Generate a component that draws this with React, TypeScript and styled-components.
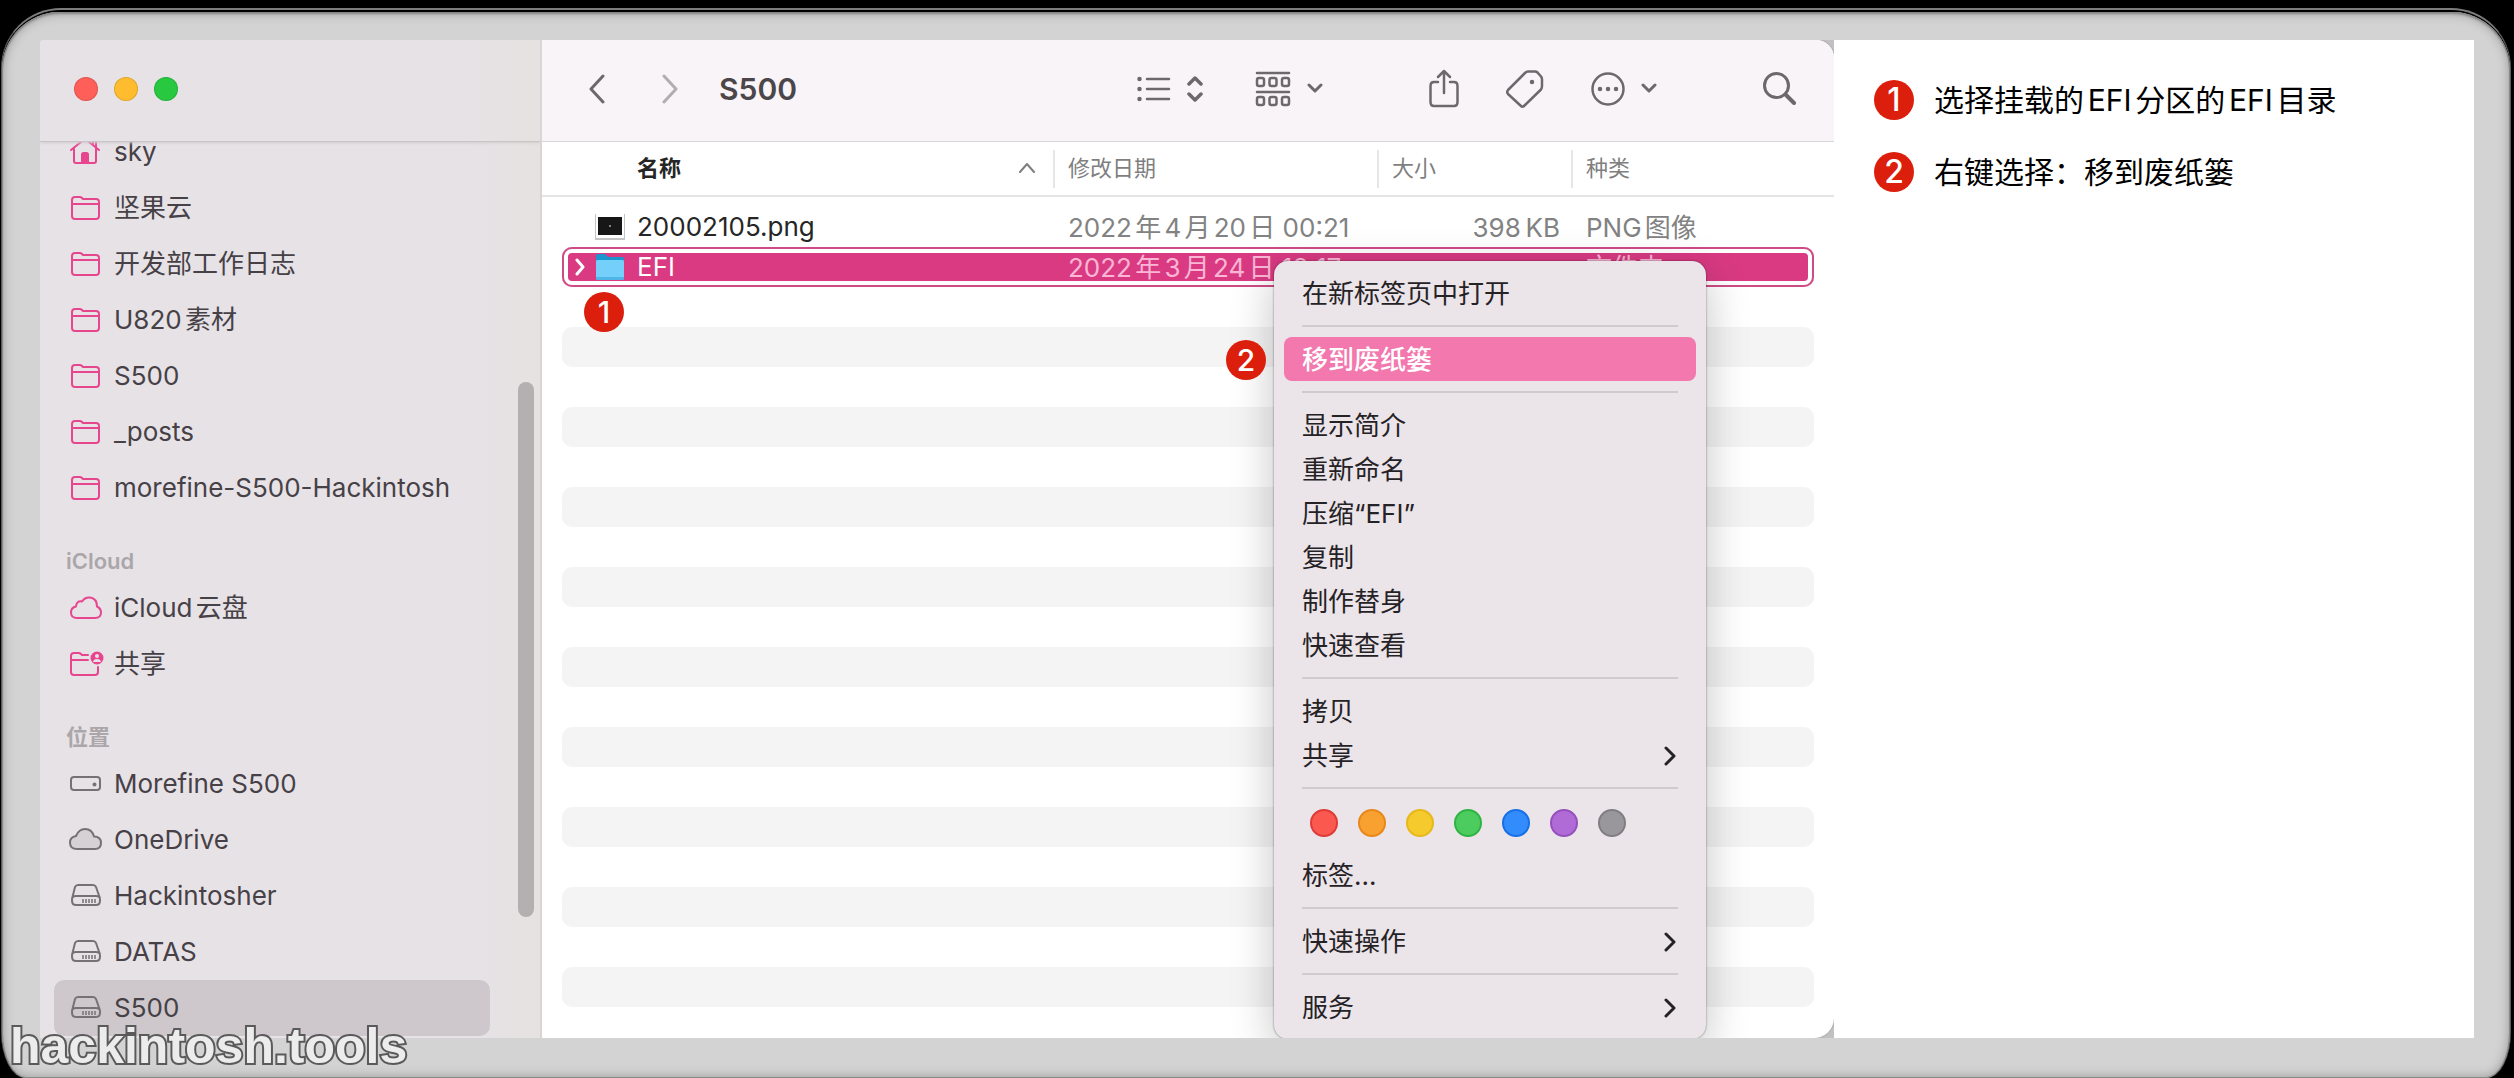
import React from "react";
import styled, { createGlobalStyle, css } from "styled-components";

const Global = createGlobalStyle`
  *, *::before, *::after { box-sizing: border-box; }
  html { background: #000; }
  body {
    margin: 0;
    background: #000;
    font-family: Inter, "Noto Sans CJK SC", sans-serif;
    font-size: 26px;
    line-height: 40px;
    text-autospace: normal;
  }
  button { font: inherit; color: inherit; background: none; border: 0; margin: 0; padding: 0; }
  ul { list-style: none; margin: 0; padding: 0; }
  svg { display: block; flex: none; }
`;

const Page = styled.div`
  position: relative;
  padding: 8px 3px 0 1px;
  overflow: hidden;
`;

const Bezel = styled.div`
  border: 1px solid #5c5c5c;
  border-top: 2px solid #7d7d7d;
  border-bottom: 0;
  border-radius: 60px 60px 24px 24px / 60px 60px 46px 46px;
  padding: 2px 0 0;
`;

const Frame = styled.div`
  padding: 28px 36px 40px 38px;
  border-radius: 58px 58px 24px 24px / 58px 58px 46px 46px;
  background: #d3d3d3;
  box-shadow: inset 0 2px 2px #8a8a8a, inset 0 0 12px #8f8f8f, inset 0 0 0 1px #858585;
  display: flex;
`;

const Window = styled.div`
  position: relative;
  flex: 1;
  min-width: 0;
  display: flex;
  overflow: hidden;
  background: linear-gradient(to right, #e7e2e5 50%, #c2c0c2 50%);
  border-radius: 4px 0 0 0;
`;

const Sidebar = styled.aside`
  position: relative;
  flex: none;
  width: 502px;
  background: linear-gradient(to right, #e7e2e6 85%, #e5e2e1);
  border-right: 2px solid #d9d5d7;
  overflow: hidden;
`;

const TitleBar = styled.div`
  position: relative;
  z-index: 1;
  height: 102px;
  padding: 0 34px 4px;
  display: flex;
  align-items: center;
  gap: 16px;
  background: linear-gradient(to right, #e7e2e5 85%, #e5e2e1);
  border-bottom: 1px solid #c9c5c6;
  box-shadow: 0 1px 3px #d0cccd;
`;

const Light = styled.button<{ $color: string }>`
  width: 24px;
  height: 24px;
  border-radius: 50%;
  background: ${(p) => p.$color};
  box-shadow: inset 0 0 0 1px rgba(0, 0, 0, 0.12);
`;

const SideScroll = styled.nav`
  margin-top: -18px;
  padding: 0 50px 2px 14px;
`;

const SideHeading = styled.h2`
  margin: 0;
  height: 64px;
  padding: 26px 0 0 12px;
  font-size: 22px;
  line-height: 38px;
  font-weight: 600;
  color: #aba6aa;
`;

const SideItem = styled.button<{ $selected?: boolean }>`
  display: flex;
  align-items: center;
  gap: 10px;
  width: 100%;
  height: 56px;
  padding: 0 14px;
  text-align: left;
  color: #464146;
  border-radius: 10px;
  background: ${(p) => (p.$selected ? "#cec8cc" : "transparent")};
`;

const ScrollThumb = styled.div`
  position: absolute;
  right: 6px;
  top: 342px;
  width: 16px;
  height: 535px;
  border-radius: 8px;
  background: #b3b0b2;
`;

const Main = styled.main`
  flex: 1;
  min-width: 0;
  background: #fff;
  border-radius: 0 18px 20px 0;
  box-shadow: 0 0 2px #8c8c8c;
  overflow: hidden;
`;

const Toolbar = styled.header`
  height: 102px;
  padding: 0 38px 4px 47px;
  display: flex;
  align-items: center;
  background: #f9f4f8;
  border-bottom: 1px solid #dad6d9;
  color: #6e686d;
`;

const Tools = styled.div<{ $gap: number }>`
  display: flex;
  align-items: center;
  gap: ${(p) => p.$gap}px;
`;

const ToolButton = styled.button<{ $dim?: boolean }>`
  display: flex;
  align-items: center;
  gap: 16px;
  opacity: ${(p) => (p.$dim ? 0.5 : 1)};
`;

const Title = styled.h1`
  margin: 0 auto 0 41px;
  font-size: 30px;
  font-weight: 600;
  color: #4b464a;
`;

const Files = styled.table`
  display: block;
  width: 100%;
  thead, tbody { display: block; }
  tbody { padding: 10px 20px 31px; }
`;

const columns = css`
  display: grid;
  grid-template-columns: minmax(0, 1fr) 324px 194px 243px;
`;

const HeadRow = styled.tr`
  ${columns}
  align-items: center;
  height: 55px;
  padding: 0 20px;
  border-bottom: 2px solid #e4e4e4;
`;

const HeadCell = styled.th<{ $main?: boolean }>`
  display: flex;
  align-items: center;
  justify-content: space-between;
  height: 38px;
  padding: ${(p) => (p.$main ? "0 18px 0 75px" : "0 0 0 13px")};
  border-left: ${(p) => (p.$main ? "0" : "2px solid #e6e6e6")};
  font-size: 22px;
  line-height: 36px;
  padding-bottom: 2px;
  font-weight: ${(p) => (p.$main ? 700 : 400)};
  color: ${(p) => (p.$main ? "#262626" : "#7f7f7f")};
`;

const Row = styled.tr<{ $striped?: boolean; $selected?: boolean }>`
  ${columns}
  height: 40px;
  line-height: 42px;
  border-radius: 10px;
  background: ${(p) => (p.$striped ? "#f4f4f4" : "transparent")};
  color: #828282;
  ${(p) =>
    p.$selected &&
    css`
      color: #fbb6d6;
      background: #d93a82;
      border: 0;
      box-shadow: inset 0 0 0 2px #cf4b85, inset 0 0 0 6px #fff;
    `}
`;

const NameCell = styled.td<{ $selected?: boolean }>`
  display: flex;
  align-items: center;
  gap: 8px;
  height: 40px;
  padding: 0 0 0 12px;
  color: ${(p) => (p.$selected ? "#fff" : "#262626")};
`;

const Disclosure = styled.span`
  display: flex;
  width: 13px;
`;

const FileName = styled.span`
  padding-left: 4px;
`;

const Cell = styled.td<{ $end?: boolean }>`
  padding: 0 11px 0 15px;
  text-align: ${(p) => (p.$end ? "right" : "left")};
`;

const Guide = styled.section`
  flex: none;
  width: 640px;
  padding: 40px;
  background: #fff;
`;

const Steps = styled.ol`
  list-style: none;
  margin: 0;
  padding: 0;
  display: grid;
  gap: 32px;
`;

const Step = styled.li`
  display: flex;
  align-items: center;
  gap: 20px;
  font-size: 30px;
  color: #000;
`;

const Badge = styled.span`
  flex: none;
  display: flex;
  align-items: center;
  justify-content: center;
  width: 40px;
  height: 40px;
  border-radius: 50%;
  background: #dc1e0c;
  color: #fff;
  font-size: 32px;
  font-weight: 500;
`;

const Pin = styled(Badge)<{ $x: number; $y: number }>`
  position: absolute;
  left: ${(p) => p.$x}px;
  top: ${(p) => p.$y}px;
  font-size: 30px;
`;

const Menu = styled.div`
  position: absolute;
  left: 1234px;
  top: 221px;
  width: 432px;
  padding: 10px;
  border-radius: 14px;
  background: #ebe4e9;
  box-shadow: 0 0 2px rgba(0, 0, 0, 0.55), 0 12px 44px rgba(0, 0, 0, 0.24);
  color: #252225;
`;

const MenuItem = styled.button<{ $active?: boolean }>`
  display: flex;
  align-items: center;
  justify-content: space-between;
  width: 100%;
  height: 44px;
  padding: 2px 20px 0 18px;
  border-radius: 8px;
  text-align: left;
  color: ${(p) => (p.$active ? "#fff" : "inherit")};
  font-weight: ${(p) => (p.$active ? 500 : 400)};
  background: ${(p) => (p.$active ? "#f278ae" : "transparent")};
`;

const Separator = styled.hr`
  height: 2px;
  margin: 10px 18px;
  border: 0;
  background: #d0c9ce;
`;

const Tags = styled.div`
  display: flex;
  gap: 20px;
  padding: 10px 26px 16px;
`;

const Tag = styled.button<{ $fill: string; $edge: string }>`
  width: 28px;
  height: 28px;
  border-radius: 50%;
  background: ${(p) => p.$fill};
  border: 2px solid ${(p) => p.$edge};
`;

const Watermark = styled.div`
  position: absolute;
  left: 10px;
  bottom: 2px;
  font-family: "Liberation Sans", Arial, sans-serif;
  font-size: 50px;
  line-height: 60px;
  font-weight: 700;
  color: #ececec;
  -webkit-text-stroke: 4px #5a5a5a;
  paint-order: stroke fill;
`;

const Stroke = ({ w, h, sw = 3, children }: { w: number; h: number; sw?: number; children: React.ReactNode }) => (
  <svg width={w} height={h} viewBox={`0 0 ${w} ${h}`} fill="none" stroke="currentColor" strokeWidth={sw} strokeLinecap="round" strokeLinejoin="round" aria-hidden="true">
    {children}
  </svg>
);

const PINK = "#e8458f";
const GRAY = "#777176";

const SideSvg = ({ color, children }: { color: string; children: React.ReactNode }) => (
  <svg width="36" height="32" viewBox="0 0 36 32" fill="none" stroke={color} strokeWidth="2" strokeLinecap="round" strokeLinejoin="round" aria-hidden="true">
    {children}
  </svg>
);

const icons: Record<string, React.ReactNode> = {
  home: (
    <SideSvg color={PINK}>
      <path d="M3 14 16 3.500Q17 3 18 3.500L31 14M6 12.500V25Q6 27 8 27H26Q28 27 28 25V12.500M25 8V4H28V11" />
      <path d="M14 27V18.500Q14 17 15.500 17H18.500Q20 17 20 18.500V27Z" fill={PINK} />
    </SideSvg>
  ),
  folder: (
    <SideSvg color={PINK}>
      <path d="M4 12V8Q4 5 7 5H11.500Q13 5 14 6L15 7H28Q31 7 31 10V24Q31 27 28 27H7Q4 27 4 24ZM4 12H31" />
    </SideSvg>
  ),
  cloud: (
    <SideSvg color={PINK}>
      <path d="M9 26Q3 26 3 20.500Q3 15.500 8 14.500Q8.500 8.500 14 9.500Q17 5 22 5.500Q29 6.500 29 14.500Q33 16.500 33 20.500Q33 26 27 26Z" />
    </SideSvg>
  ),
  shared: (
    <SideSvg color={PINK}>
      <path d="M3 12V8Q3 5 6 5H10.500Q12 5 13 6L14 7H20M3 12H20M3 12V24Q3 27 6 27H27Q30 27 30 24V19" />
      <circle cx="29" cy="10" r="5.500" fill={PINK} />
      <circle cx="29" cy="8" r="2" fill="#e7e2e6" stroke="none" />
      <path d="M25 14Q25.500 11 29 11Q32.500 11 33 14Z" fill="#e7e2e6" stroke="none" />
    </SideSvg>
  ),
  mini: (
    <SideSvg color={GRAY}>
      <rect x="3" y="9" width="29" height="13" rx="3" />
      <circle cx="26.500" cy="16.500" r="1" fill={GRAY} />
    </SideSvg>
  ),
  onedrive: (
    <SideSvg color={GRAY}>
      <path d="M9 25Q2 25 2 18.500Q2 13 8 12Q11 5 17 5Q24 5 26 12.500Q33 12.500 33 19Q33 25 27 25Z" fill="#d6d1d4" />
    </SideSvg>
  ),
  disk: (
    <SideSvg color={GRAY}>
      <path d="M10 5H25Q27 5 28 7L31.500 17Q32 18 32 20.500Q32 25 28 25H8Q4 25 4 20.500Q4 18 4.500 17L7 7Q8 5 10 5ZM5 17Q6 16 8 16H28Q30 16 31 17" />
      <path d="M15 19V23M18 19V23M21 19V23M24 19V23M27 19V23" strokeWidth="1.500" strokeLinecap="butt" />
    </SideSvg>
  ),
};

const places = [
  {
    items: [
      ["home", "sky"],
      ["folder", "坚果云"],
      ["folder", "开发部工作日志"],
      ["folder", "U820素材"],
      ["folder", "S500"],
      ["folder", "_posts"],
      ["folder", "morefine-S500-Hackintosh"],
    ],
  },
  { heading: "iCloud", items: [["cloud", "iCloud云盘"], ["shared", "共享"]] },
  {
    heading: "位置",
    items: [
      ["mini", "Morefine S500"],
      ["onedrive", "OneDrive"],
      ["disk", "Hackintosher"],
      ["disk", "DATAS"],
      ["disk", "S500", "selected"],
    ],
  },
];

const ChevronDown = () => (
  <Stroke w={16} h={12} sw={3}>
    <path d="M2 2 8 8 14 2" />
  </Stroke>
);

const MenuArrow = () => (
  <Stroke w={12} h={20} sw={3}>
    <path d="M2 2 10 10 2 18" />
  </Stroke>
);

type Entry = { label: string; sub?: boolean; active?: boolean };
const beforeTags: Entry[][] = [
  [{ label: "在新标签页中打开" }],
  [{ label: "移到废纸篓", active: true }],
  [
    { label: "显示简介" },
    { label: "重新命名" },
    { label: "压缩“EFI”" },
    { label: "复制" },
    { label: "制作替身" },
    { label: "快速查看" },
  ],
  [{ label: "拷贝" }, { label: "共享", sub: true }],
];
const afterTags: Entry[][] = [[{ label: "标签..." }], [{ label: "快速操作", sub: true }], [{ label: "服务", sub: true }]];

const tagColors = [
  ["红色", "#fb5850", "#dd3c37"],
  ["橙色", "#f9a130", "#e8881a"],
  ["黄色", "#f4ca2c", "#e6b81c"],
  ["绿色", "#4ccc5e", "#2fb344"],
  ["蓝色", "#328cfb", "#1670e6"],
  ["紫色", "#b06bd6", "#9450bd"],
  ["灰色", "#99979b", "#807e82"],
];

const Items = ({ list }: { list: Entry[] }) => (
  <>
    {list.map((e) => (
      <MenuItem key={e.label} role="menuitem" $active={e.active}>
        {e.label}
        {e.sub && <MenuArrow />}
      </MenuItem>
    ))}
  </>
);

const fillerRows = Array.from({ length: 18 }, (_, i) => i);

export default function App() {
  return (
    <>
      <Global />
      <Page>
        <Bezel>
          <Frame>
            <Window>
              <Sidebar>
                <TitleBar>
                  <Light $color="#fe5f58" aria-label="关闭" />
                  <Light $color="#febc2e" aria-label="最小化" />
                  <Light $color="#28c941" aria-label="缩放" />
                </TitleBar>
                <SideScroll>
                  {places.map((group, i) => (
                    <div key={i}>
                      {group.heading && <SideHeading>{group.heading}</SideHeading>}
                      <ul>
                        {group.items.map(([icon, label, selected]) => (
                          <li key={label}>
                            <SideItem $selected={!!selected}>
                              {icons[icon]}
                              {label}
                            </SideItem>
                          </li>
                        ))}
                      </ul>
                    </div>
                  ))}
                </SideScroll>
                <ScrollThumb />
              </Sidebar>
              <Main>
                <Toolbar>
                  <Tools $gap={57}>
                    <ToolButton aria-label="后退">
                      <Stroke w={16} h={30}>
                        <path d="M14 2 2 15 14 28" />
                      </Stroke>
                    </ToolButton>
                    <ToolButton aria-label="前进" $dim>
                      <Stroke w={16} h={30}>
                        <path d="M2 2 14 15 2 28" />
                      </Stroke>
                    </ToolButton>
                  </Tools>
                  <Title>S500</Title>
                  <Tools $gap={106}>
                    <Tools $gap={52}>
                      <ToolButton aria-label="列表显示">
                        <Stroke w={34} h={26} sw={2.5}>
                          <path d="M10 3H32M10 13H32M10 23H32" />
                          <path d="M2.500 3V3M2.500 13V13M2.500 23V23" strokeWidth="4.500" />
                        </Stroke>
                        <Stroke w={16} h={26} sw={3.5}>
                          <path d="M2 8 8 2 14 8M2 18 8 24 14 18" />
                        </Stroke>
                      </ToolButton>
                      <ToolButton aria-label="分组">
                        <Stroke w={36} h={36} sw={2.5}>
                          <path d="M2 2H34M2 21H34" />
                          <rect x="2" y="7" width="7" height="8" rx="2" />
                          <rect x="14.500" y="7" width="7" height="8" rx="2" />
                          <rect x="27" y="7" width="7" height="8" rx="2" />
                          <rect x="2" y="26" width="7" height="8" rx="2" />
                          <rect x="14.500" y="26" width="7" height="8" rx="2" />
                          <rect x="27" y="26" width="7" height="8" rx="2" />
                        </Stroke>
                        <ChevronDown />
                      </ToolButton>
                    </Tools>
                    <Tools $gap={47}>
                      <ToolButton aria-label="共享">
                        <Stroke w={30} h={40} sw={2.5}>
                          <path d="M9 13H5Q1.500 13 1.500 17V33Q1.500 37 5 37H25Q28.500 37 28.500 33V17Q28.500 13 25 13H21M15 24V2M9 8 15 2 21 8" />
                        </Stroke>
                      </ToolButton>
                      <ToolButton aria-label="编辑标签">
                        <Stroke w={38} h={38} sw={2.5}>
                          <path d="M19 3Q20.500 1.500 22 1.500H29Q30.500 1.500 31.500 2.500L35 6.500Q36 7.500 36 9.500V16Q36 18 35 19.500L18 36Q16.500 37.500 15 36L2 24Q0.500 22 2 20Z" />
                          <circle cx="26" cy="12" r="1.500" fill="currentColor" stroke-width="1.500" />
                        </Stroke>
                      </ToolButton>
                      <ToolButton aria-label="更多操作">
                        <Stroke w={34} h={34} sw={2.5}>
                          <circle cx="17" cy="17" r="15.500" />
                          <path d="M9 17V17M17 17V17M25 17V17" strokeWidth="4.500" />
                        </Stroke>
                        <ChevronDown />
                      </ToolButton>
                    </Tools>
                    <ToolButton aria-label="搜索">
                      <Stroke w={33} h={33}>
                        <circle cx="13.500" cy="13.500" r="12" />
                        <path d="M23 23 31 31" strokeWidth="4" />
                      </Stroke>
                    </ToolButton>
                  </Tools>
                </Toolbar>
                <Files>
                  <thead>
                    <HeadRow>
                      <HeadCell $main>
                        名称
                        <Stroke w={16} h={10} sw={2}>
                          <path d="M1 9 8 1 15 9" stroke="#7f7f7f" />
                        </Stroke>
                      </HeadCell>
                      <HeadCell>修改日期</HeadCell>
                      <HeadCell>大小</HeadCell>
                      <HeadCell>种类</HeadCell>
                    </HeadRow>
                  </thead>
                  <tbody>
                    <Row>
                      <NameCell>
                        <Disclosure />
                        <svg width="30" height="28" viewBox="0 0 30 28" aria-hidden="true">
                          <rect x="0" y="1" width="30" height="26" fill="#c4c4c4" />
                          <rect x="1" y="1" width="28" height="24" fill="#fff" />
                          <rect x="3" y="4" width="24" height="18" fill="#171717" />
                          <circle cx="15" cy="13" r="1" fill="#aaa" />
                        </svg>
                        <FileName>20002105.png</FileName>
                      </NameCell>
                      <Cell>2022年4月20日 00:21</Cell>
                      <Cell $end>398{"\u2009"}KB</Cell>
                      <Cell>PNG图像</Cell>
                    </Row>
                    <Row $selected>
                      <NameCell $selected>
                        <Disclosure>
                          <Stroke w={12} h={18} sw={3}>
                            <path d="M3 2 9 9 3 16" />
                          </Stroke>
                        </Disclosure>
                        <svg width="30" height="28" viewBox="0 0 30 28" aria-hidden="true">
                          <path d="M1 3Q1 1 3 1H10L13 4H27Q29 4 29 6V14H1Z" fill="#1c95cf" />
                          <path d="M1 8Q1 7 3 7H27Q29 7 29 8V25Q29 27 27 27H3Q1 27 1 25Z" fill="#74cffa" />
                          <path d="M1 24H29V25Q29 27 27 27H3Q1 27 1 25Z" fill="#4fb4e6" />
                        </svg>
                        <FileName>EFI</FileName>
                      </NameCell>
                      <Cell>2022年3月24日 18:17</Cell>
                      <Cell $end />
                      <Cell>文件夹</Cell>
                    </Row>
                    {fillerRows.map((i) => (
                      <Row key={i} $striped={i % 2 === 1} aria-hidden="true">
                        <td />
                      </Row>
                    ))}
                  </tbody>
                </Files>
              </Main>
              <Menu role="menu">
                {beforeTags.map((list, i) => (
                  <React.Fragment key={i}>
                    <Items list={list} />
                    <Separator />
                  </React.Fragment>
                ))}
                <Tags>
                  {tagColors.map(([name, fill, edge]) => (
                    <Tag key={name} aria-label={name} $fill={fill} $edge={edge} />
                  ))}
                </Tags>
                {afterTags.map((list, i) => (
                  <React.Fragment key={i}>
                    {i > 0 && <Separator />}
                    <Items list={list} />
                  </React.Fragment>
                ))}
              </Menu>
              <Pin $x={544} $y={252}>1</Pin>
              <Pin $x={1186} $y={300}>2</Pin>
            </Window>
            <Guide>
              <Steps>
                <Step>
                  <Badge>1</Badge>
                  选择挂载的EFI分区的EFI目录
                </Step>
                <Step>
                  <Badge>2</Badge>
                  右键选择：移到废纸篓
                </Step>
              </Steps>
            </Guide>
          </Frame>
        </Bezel>
        <Watermark>hackintosh.tools</Watermark>
      </Page>
    </>
  );
}
